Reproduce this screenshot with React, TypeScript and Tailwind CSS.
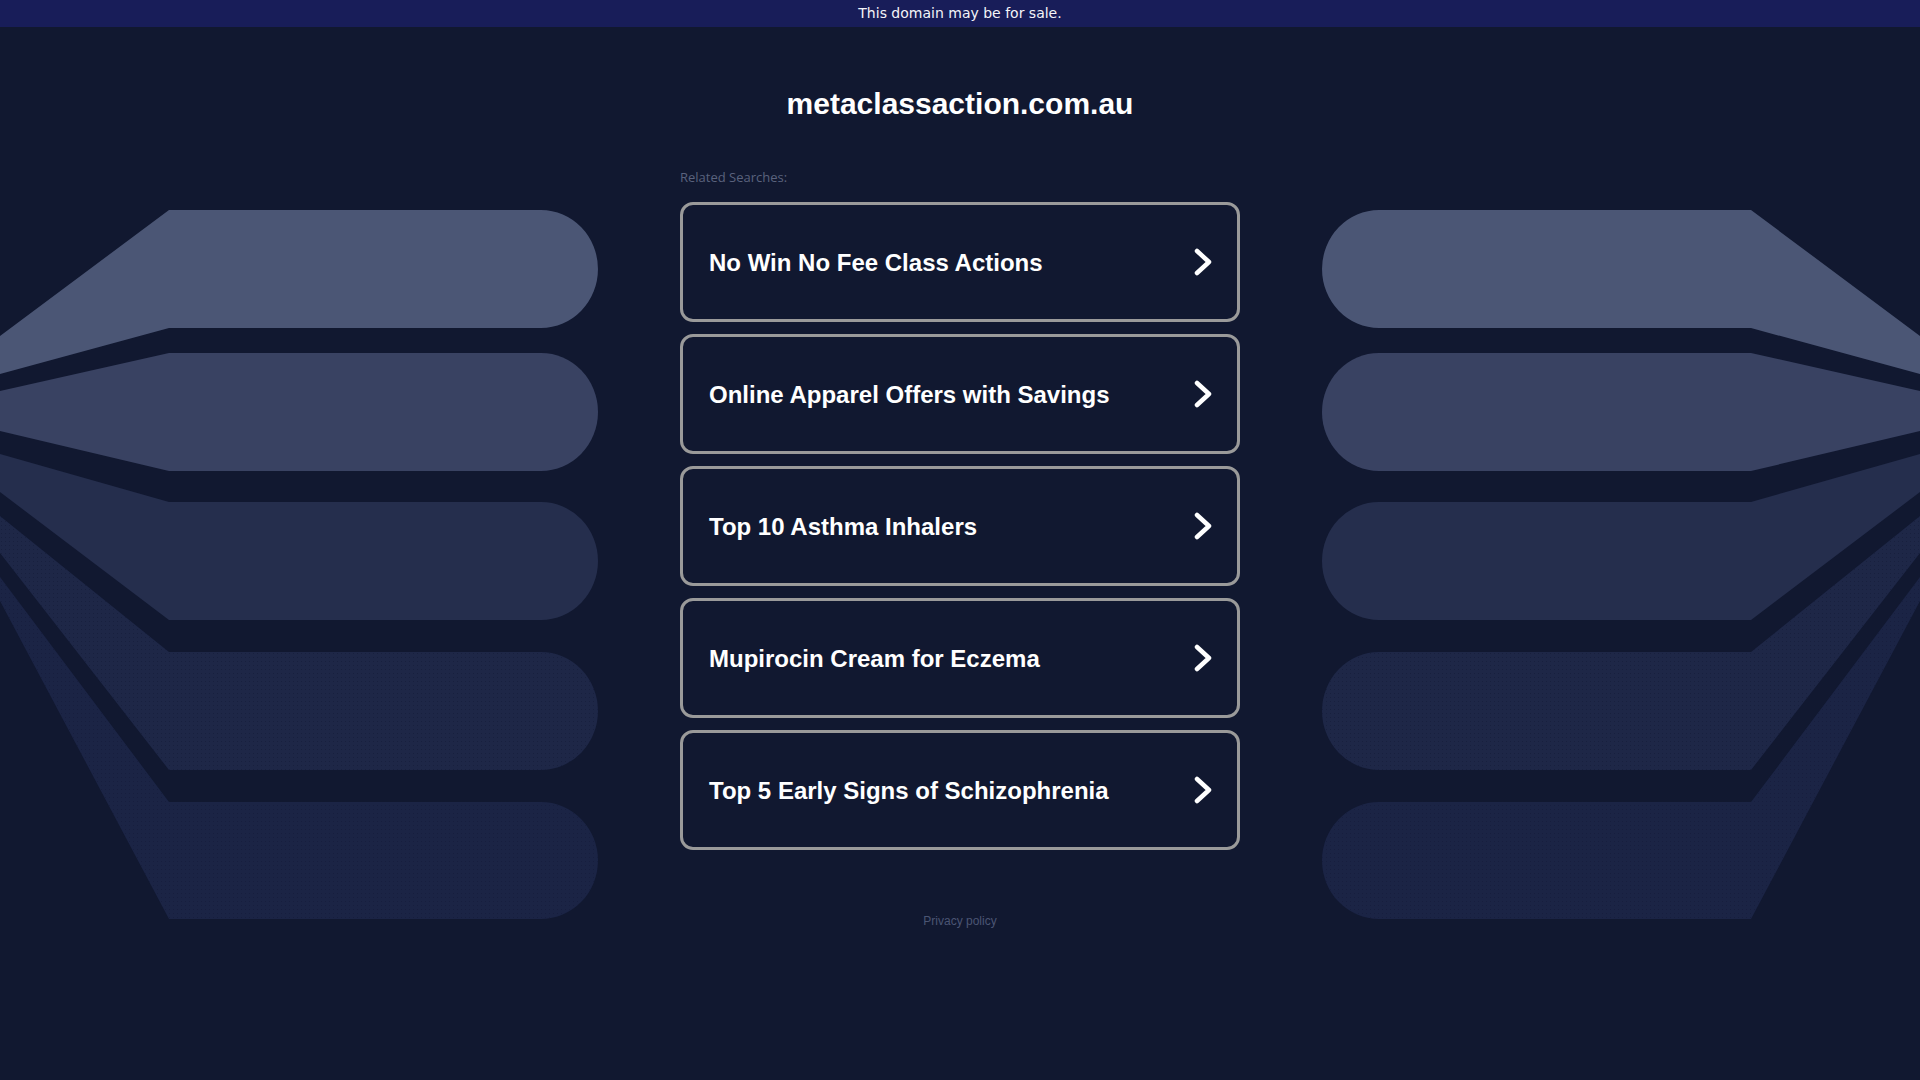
import React from "react";

const shapes = [
  { t: 210, b: 328, l1: 336, l2: 374, fill: "#4b5675", dots: false },
  { t: 353, b: 471, l1: 391, l2: 431, fill: "#394262", dots: false },
  { t: 502, b: 620, l1: 454, l2: 492, fill: "#252e4d", dots: false },
  { t: 652, b: 770, l1: 516, l2: 553, fill: "#1e2747", dots: true },
  { t: 802, b: 919, l1: 577, l2: 601, fill: "#1b2445", dots: true },
];

function Decoration({ mirror, id }: { mirror?: boolean; id: string }) {
  return (
    <svg
      width="600"
      height="1080"
      viewBox="0 0 600 1080"
      className={
        mirror
          ? "absolute right-0 top-0 -scale-x-100 pointer-events-none"
          : "absolute left-0 top-0 pointer-events-none"
      }
    >
      <defs>
        <pattern id={`dots-${id}`} width="4" height="4" patternUnits="userSpaceOnUse">
          <rect x="1" y="1" width="1" height="1" fill="#141b38" opacity="0.6" />
        </pattern>
      </defs>
      {shapes.map((s, i) => {
        const r = (s.b - s.t) / 2;
        const d = `M 0 ${s.l1} L 169 ${s.t} L 541 ${s.t} A 57 ${r} 0 0 1 541 ${s.b} L 169 ${s.b} L 0 ${s.l2} Z`;
        return (
          <g key={i}>
            <path d={d} fill={s.fill} />
            {s.dots && <path d={d} fill={`url(#dots-${id})`} />}
          </g>
        );
      })}
    </svg>
  );
}

function Chevron() {
  return (
    <svg width="20" height="28" viewBox="0 0 20 28" fill="none">
      <polyline
        points="4,3 16,14 4,25"
        stroke="#ffffff"
        strokeWidth="4.5"
        strokeLinecap="round"
        strokeLinejoin="round"
      />
    </svg>
  );
}

const items = [
  "No Win No Fee Class Actions",
  "Online Apparel Offers with Savings",
  "Top 10 Asthma Inhalers",
  "Mupirocin Cream for Eczema",
  "Top 5 Early Signs of Schizophrenia",
];

export default function App() {
  return (
    <div
      className="relative min-h-screen w-full overflow-hidden bg-[#111830]"
      style={{ fontFamily: '"Liberation Sans", Arial, sans-serif' }}
    >
      <Decoration id="l" />
      <Decoration id="r" mirror />
      <div className="relative flex flex-col items-center">
        <div
          className="w-full h-[27px] bg-[#181d59] text-[#f4f4f8] text-[14px] leading-[27px] text-center"
          style={{ fontFamily: '"DejaVu Sans", sans-serif' }}
        >
          This domain may be for sale.
        </div>
        <h1 className="mt-[59px] text-white font-bold text-[30px] leading-[36px]">
          metaclassaction.com.au
        </h1>
        <div className="w-[560px] mt-[47px]">
          <div
            className="text-[13px] leading-[16px] text-[#5a627d]"
            style={{ fontFamily: '"Open Sans", sans-serif' }}
          >
            Related Searches:
          </div>
          <div className="mt-[17px] flex flex-col gap-[12px]">
            {items.map((t) => (
              <a
                key={t}
                href="#"
                className="h-[120px] flex items-center justify-between border-[3px] border-[#9a9a9a] rounded-[13px] pl-[26px] pr-[24px] text-white font-bold text-[24px]"
              >
                <span className="pt-[2px]">{t}</span>
                <Chevron />
              </a>
            ))}
          </div>
        </div>
        <div className="mt-[63px] text-[12px] leading-[16px] text-[#4b5573]">
          Privacy policy
        </div>
      </div>
    </div>
  );
}
